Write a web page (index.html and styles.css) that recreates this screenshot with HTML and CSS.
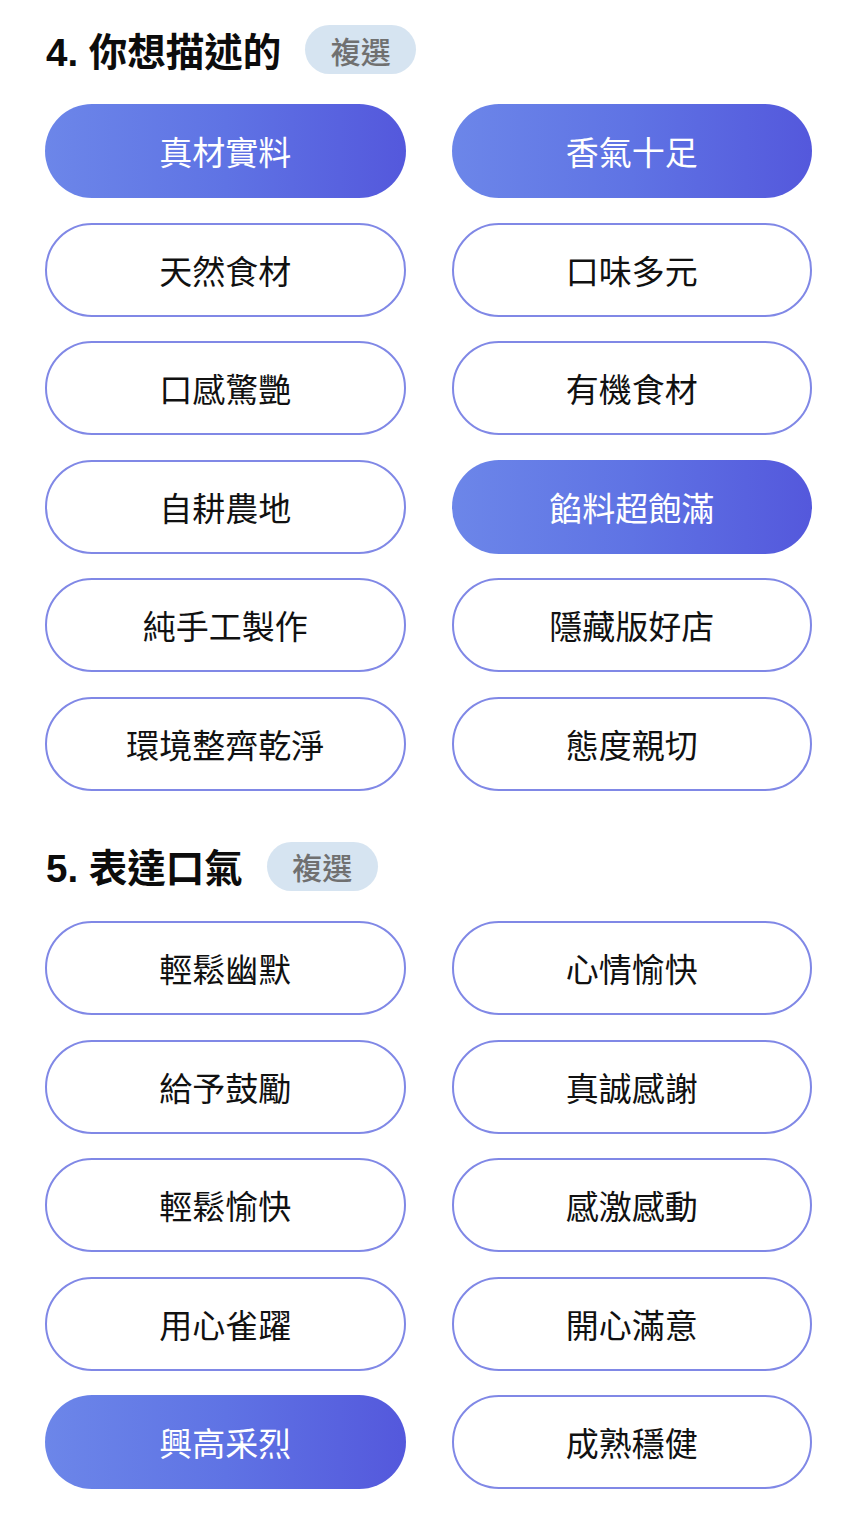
FILE: index.html
```html
<!DOCTYPE html>
<html lang="zh-Hant">
<head>
<meta charset="utf-8">
<link rel="stylesheet" href="styles.css">
</head>
<body>
<div class="page">
  <section class="section">
    <div class="head">
      <h2 class="title">4. 你想描述的</h2>
      <span class="badge">複選</span>
    </div>
    <div class="grid">
      <button class="opt on">真材實料</button>
      <button class="opt on">香氣十足</button>
      <button class="opt">天然食材</button>
      <button class="opt">口味多元</button>
      <button class="opt">口感驚艷</button>
      <button class="opt">有機食材</button>
      <button class="opt">自耕農地</button>
      <button class="opt on">餡料超飽滿</button>
      <button class="opt">純手工製作</button>
      <button class="opt">隱藏版好店</button>
      <button class="opt">環境整齊乾淨</button>
      <button class="opt">態度親切</button>
    </div>
  </section>
  <section class="section second">
    <div class="head">
      <h2 class="title">5. 表達口氣</h2>
      <span class="badge">複選</span>
    </div>
    <div class="grid">
      <button class="opt">輕鬆幽默</button>
      <button class="opt">心情愉快</button>
      <button class="opt">給予鼓勵</button>
      <button class="opt">真誠感謝</button>
      <button class="opt">輕鬆愉快</button>
      <button class="opt">感激感動</button>
      <button class="opt">用心雀躍</button>
      <button class="opt">開心滿意</button>
      <button class="opt on">興高采烈</button>
      <button class="opt">成熟穩健</button>
    </div>
  </section>
</div>
</body>
</html>
```

FILE: styles.css
```css
* { box-sizing: border-box; }
html, body { margin: 0; padding: 0; background: #ffffff; }
body {
  font-family: "Liberation Sans", "Noto Sans CJK TC", sans-serif;
  color: #111111;
}
.page {
  padding: 25px 46px 0 45px;
}
.section.second { margin-top: 51px; }
.head {
  display: flex;
  align-items: center;
  height: 49px;
  gap: 24px;
  margin-bottom: 30px;
}
.title {
  margin: 0;
  font-size: 38.5px;
  font-weight: 700;
  line-height: 49px;
  letter-spacing: 0;
  color: #0c0c0c;
  padding: 5px 0 0 1px;
}
.badge {
  display: inline-flex;
  align-items: center;
  justify-content: center;
  width: 111px;
  height: 49px;
  border-radius: 25px;
  background: #d6e4f1;
  color: #707070;
  font-family: "Noto Sans CJK TC", sans-serif;
  font-size: 30px;
  font-weight: 500;
}
.grid {
  display: grid;
  grid-template-columns: 1fr 1fr;
  column-gap: 46px;
  row-gap: 24.6px;
}
.opt {
  height: 94px;
  border: 2px solid #8088e6;
  border-radius: 47px;
  background: #ffffff;
  font-family: "Noto Sans CJK TC", sans-serif;
  font-size: 33px;
  font-weight: 400;
  color: #111111;
  display: flex;
  align-items: center;
  justify-content: center;
  padding: 0;
}
.opt.on {
  border: none;
  background: linear-gradient(90deg, #6c86e9 0%, #5f73e4 50%, #5458dc 100%);
  color: #ffffff;
}
```
